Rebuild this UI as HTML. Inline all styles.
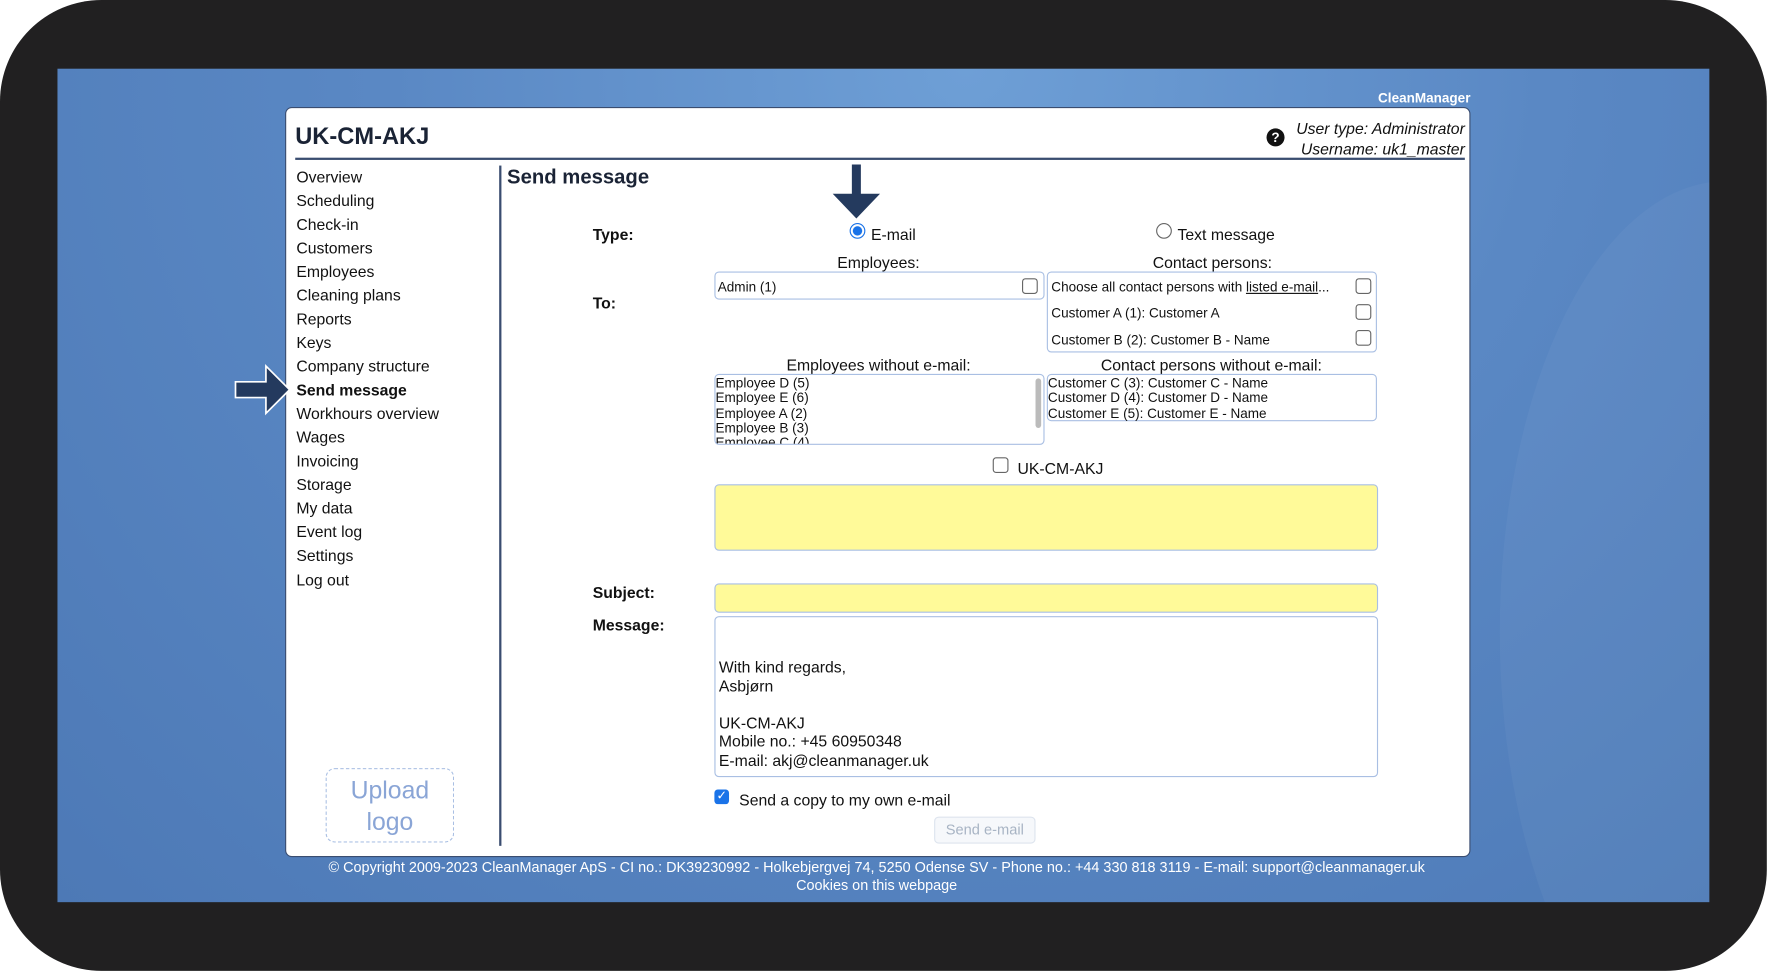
<!DOCTYPE html>
<html><head><meta charset="utf-8"><style>
html,body{margin:0;padding:0;width:1767px;height:971px;overflow:hidden;background:#fff;}
#s{position:absolute;left:0;top:0;width:1568px;height:862px;transform:scale(1.1268,1.1263);transform-origin:0 0;font-family:"Liberation Sans",sans-serif;color:#111;}
.a{position:absolute;white-space:nowrap;}
#frame{position:absolute;left:0;top:0;width:1568px;height:862px;background:#212021;border-radius:90px;}
#blue{position:absolute;left:51px;top:61px;width:1466px;height:740px;background:radial-gradient(ellipse at 55% 0%,#6e9fd6 0%,#5a88c4 45%,#4d79b6 100%);overflow:hidden;}
#panel{position:absolute;left:253px;top:95px;width:1052px;height:666px;background:#fff;border-radius:6px;border:1px solid #3a4d70;box-sizing:border-box;}
.nav{position:absolute;left:263px;font-size:14px;}
.lbl{font-size:14px;font-weight:bold;}
.box{position:absolute;border:1.5px solid #a9bfe3;border-radius:4px;background:#fff;box-sizing:border-box;}
.cb{position:absolute;width:12px;height:12px;border:1px solid #666;border-radius:3px;background:#fff;}
.sm{font-size:12px;}
</style></head><body><div id="s">
<div id="frame"></div>
<div id="blue"><div style="position:absolute;left:1280px;top:100px;width:400px;height:800px;border-radius:50%;background:rgba(255,255,255,0.04)"></div></div>
<div class="a" style="right:263px;top:80px;font-size:12px;font-weight:bold;color:#fff">CleanManager</div>
<div id="panel"></div>
<div class="a" style="left:262px;top:110px;font-size:21px;font-weight:bold;color:#1a2335">UK-CM-AKJ</div>
<div class="a" style="left:1124px;top:114px;width:16px;height:16px;border-radius:50%;background:#111;color:#fff;font-size:12px;font-weight:bold;text-align:center;line-height:16px">?</div>
<div class="a" style="right:268px;top:105px;font-size:14px;font-style:italic;text-align:right;line-height:18px">User type: Administrator<br>Username: uk1_master</div>
<div class="a" style="left:262px;top:140px;width:1038px;height:1.5px;background:#3a4d70"></div>
<div class="a" style="left:443px;top:147px;width:1.5px;height:604px;background:#3a4d70"></div>

<div class="nav" style="top:149px">Overview</div>
<div class="nav" style="top:170px">Scheduling</div>
<div class="nav" style="top:191px">Check-in</div>
<div class="nav" style="top:212px">Customers</div>
<div class="nav" style="top:233px">Employees</div>
<div class="nav" style="top:254px">Cleaning plans</div>
<div class="nav" style="top:275px">Reports</div>
<div class="nav" style="top:296px">Keys</div>
<div class="nav" style="top:317px">Company structure</div>
<div class="nav" style="top:338px;font-weight:bold">Send message</div>
<div class="nav" style="top:359px">Workhours overview</div>
<div class="nav" style="top:380px">Wages</div>
<div class="nav" style="top:401px">Invoicing</div>
<div class="nav" style="top:422px">Storage</div>
<div class="nav" style="top:443px">My data</div>
<div class="nav" style="top:464px">Event log</div>
<div class="nav" style="top:485px">Settings</div>
<div class="nav" style="top:507px">Log out</div>
<svg class="a" style="left:206px;top:322px" width="54" height="48"><path d="M3 17 H30 V3 L51 24 L30 45 V31 H3 Z" fill="#243a5e" stroke="#fff" stroke-width="1.5"/></svg>
<div class="a" style="left:289px;top:682px;width:114px;height:66px;border:1px dashed #a9bfe3;border-radius:8px;color:#8aa5d6;font-size:22px;text-align:center;line-height:28px;padding-top:5px;box-sizing:border-box;white-space:normal">Upload<br>logo</div>

<div class="a" style="left:450px;top:147px;font-size:18px;font-weight:bold;color:#1a2335">Send message</div>
<svg class="a" style="left:738px;top:145px" width="46" height="50"><path d="M18 1 H26 V27 H43 L22 49 L1 27 H18 Z" fill="#243a5e"/></svg>
<div class="a lbl" style="left:526px;top:200px">Type:</div>
<div class="a" style="left:754px;top:198px;width:12px;height:12px;border-radius:50%;border:1px solid #1a73e8;background:radial-gradient(circle,#1a73e8 45%,#fff 52%)"></div>
<div class="a" style="left:773px;top:200px;font-size:14px">E-mail</div>
<div class="a" style="left:1026px;top:198px;width:12px;height:12px;border-radius:50%;border:1px solid #666;background:#fff"></div>
<div class="a" style="left:1045px;top:200px;font-size:14px">Text message</div>
<div class="a" style="left:743px;top:225px;font-size:14px">Employees:</div>
<div class="a" style="left:1023px;top:225px;font-size:14px">Contact persons:</div>
<div class="a lbl" style="left:526px;top:261px">To:</div>
<div class="box" style="left:634px;top:241px;width:293px;height:25px"></div>
<div class="a sm" style="left:637px;top:248px">Admin (1)</div>
<div class="cb" style="left:907px;top:247px"></div>
<div class="box" style="left:929px;top:241px;width:293px;height:72px"></div>
<div class="a sm" style="left:933px;top:248px">Choose all contact persons with <u>listed e-mail</u>...</div>
<div class="cb" style="left:1203px;top:247px"></div>
<div class="a sm" style="left:933px;top:271px">Customer A (1): Customer A</div>
<div class="cb" style="left:1203px;top:270px"></div>
<div class="a sm" style="left:933px;top:295px">Customer B (2): Customer B - Name</div>
<div class="cb" style="left:1203px;top:293px"></div>
<div class="a" style="left:698px;top:316px;font-size:14px">Employees without e-mail:</div>
<div class="a" style="left:977px;top:316px;font-size:14px">Contact persons without e-mail:</div>
<div class="box" style="left:634px;top:332px;width:293px;height:63px;overflow:hidden"><div class="sm" style="position:absolute;left:0;top:1px;line-height:13.3px;white-space:nowrap">Employee D (5)<br>Employee E (6)<br>Employee A (2)<br>Employee B (3)<br>Employee C (4)</div><div style="position:absolute;right:2px;top:3px;width:5px;height:44px;background:#bbb;border-radius:3px"></div></div>
<div class="box" style="left:929px;top:332px;width:293px;height:42px"><div class="sm" style="position:absolute;left:0;top:1px;line-height:13.3px;white-space:nowrap">Customer C (3): Customer C - Name<br>Customer D (4): Customer D - Name<br>Customer E (5): Customer E - Name</div></div>
<div class="cb" style="left:881px;top:406px"></div>
<div class="a" style="left:903px;top:408px;font-size:14px">UK-CM-AKJ</div>
<div class="box" style="left:634px;top:430px;width:589px;height:59px;background:#fffa99"></div>
<div class="a lbl" style="left:526px;top:518px">Subject:</div>
<div class="box" style="left:634px;top:518px;width:589px;height:26px;background:#fffa99"></div>
<div class="a lbl" style="left:526px;top:547px">Message:</div>
<div class="box" style="left:634px;top:547px;width:589px;height:143px"></div>
<div class="a" style="left:638px;top:584px;font-size:14px;line-height:16.5px">With kind regards,<br>Asbjørn<br><br>UK-CM-AKJ<br>Mobile no.: +45 60950348<br>E-mail: akj@cleanmanager.uk</div>
<div class="a" style="left:634px;top:701px;width:13px;height:13px;border-radius:3px;background:#1a73e8;color:#fff;font-size:11px;text-align:center;line-height:13px">✓</div>
<div class="a" style="left:656px;top:702px;font-size:14px">Send a copy to my own e-mail</div>
<div class="a" style="left:829px;top:725px;width:88px;height:22px;border:1px solid #dde4ee;border-radius:4px;background:#f6f8fb;color:#a8b4c4;font-size:13px;text-align:center;line-height:22px">Send e-mail</div>
<div class="a" style="left:0;width:1556px;top:762px;text-align:center;color:#fff;font-size:12.8px;line-height:16px">© Copyright 2009-2023 CleanManager ApS - CI no.: DK39230992 - Holkebjergvej 74, 5250 Odense SV - Phone no.: +44 330 818 3119 - E-mail: support@cleanmanager.uk<br>Cookies on this webpage</div>
</div></body></html>
